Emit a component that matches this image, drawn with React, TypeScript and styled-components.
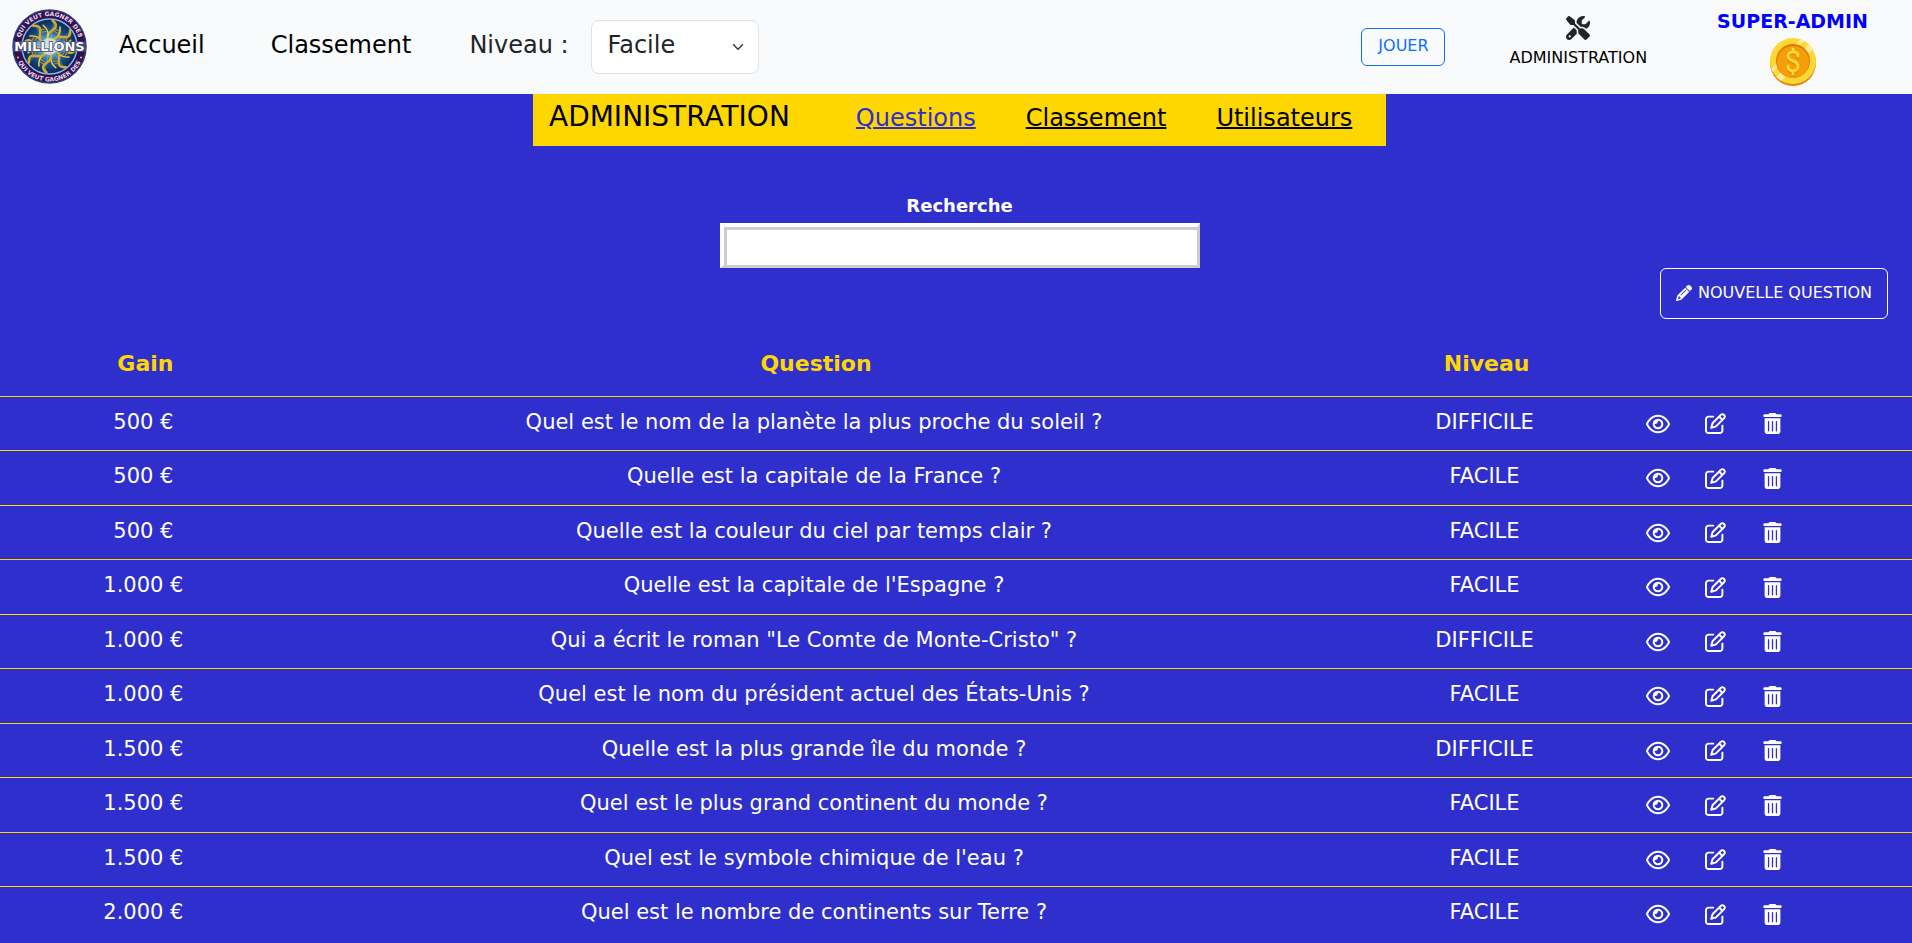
import React from "react";
import styled, { createGlobalStyle } from "styled-components";
import { FaPencil, FaRegEye, FaRegPenToSquare, FaScrewdriverWrench, FaTrashCan } from "react-icons/fa6";

const Global = createGlobalStyle`
  *, *::before, *::after { box-sizing: border-box; }
  body {
    margin: 0;
    background: #2f2fcd;
    color: #fff;
    font-family: "DejaVu Sans", Verdana, sans-serif;
    font-size: 21px;
    line-height: 30px;
  }
`;

const Navbar = styled.header`
  display: flex;
  align-items: center;
  height: 94px;
  padding: 0 44px 2px 12px;
  background: #f8fafc;
  color: #212529;
`;

const NavLinks = styled.nav`
  display: flex;
  align-items: center;
  gap: 66px;
  margin-left: 32px;
  padding-bottom: 2px;
`;

const NavLink = styled.a`
  color: #000;
  font-size: 24px;
  line-height: 36px;
  text-decoration: none;
`;

const LevelField = styled.div`
  display: flex;
  align-items: center;
  gap: 22px;
  margin: 0 auto 0 58px;
  padding-top: 2px;
  font-size: 24px;
`;

const LevelLabel = styled.label`
  padding-bottom: 4px;
`;

const LevelSelectWrap = styled.div`
  display: grid;
  align-items: center;
  & > * { grid-area: 1 / 1; }
  svg { justify-self: end; margin-right: 15px; pointer-events: none; }
`;

const LevelSelect = styled.select`
  appearance: none;
  width: 168px;
  height: 54px;
  padding: 0 16px 4px;
  border: 1px solid #dee2e6;
  border-radius: 8px;
  background: #fff;
  color: #212529;
  font: inherit;
`;

const PlayButton = styled.button`
  min-width: 84px;
  height: 38px;
  margin-top: 2px;
  padding: 0 12px 2px;
  border: 1px solid #0d6efd;
  border-radius: 6px;
  background: transparent;
  color: #0d6efd;
  font: inherit;
  font-size: 16px;
`;

const AdminLink = styled.a`
  display: flex;
  flex-direction: column;
  align-items: center;
  gap: 6px;
  margin: 0 70px 0 64px;
  padding-bottom: 6px;
  color: #000;
  font-size: 16px;
  line-height: 24px;
  text-decoration: none;
  svg { color: #212529; }
`;

const Account = styled.div`
  display: flex;
  flex-direction: column;
  align-items: center;
  gap: 2px;
  color: #00f;
  font-size: 19px;
  font-weight: 700;
`;

const PageHead = styled.div`
  padding-left: 7px;
`;

const AdminBar = styled.nav`
  display: flex;
  align-items: flex-start;
  gap: 66px;
  width: 853px;
  height: 52px;
  margin: 0 auto;
  padding: 5px 0 0 16px;
  background: gold;
  color: #000;
`;

const AdminTitle = styled.h1`
  margin: 0;
  font-size: 28px;
  font-weight: 400;
  line-height: 36px;
`;

const AdminTabs = styled.div`
  display: flex;
  gap: 50px;
`;

const AdminTab = styled.a<{ $active?: boolean }>`
  color: ${(p) => (p.$active ? "#2f2fcd" : "#000")};
  font-size: 24px;
  line-height: 38px;
  text-decoration: underline;
  text-decoration-thickness: 2px;
`;

const Search = styled.form`
  display: flex;
  flex-direction: column;
  align-items: center;
  margin-top: 46px;
`;

const SearchLabel = styled.label`
  font-size: 18px;
  font-weight: 700;
  line-height: 28px;
`;

const SearchInput = styled.input`
  width: 480px;
  height: 45px;
  margin-top: 3px;
  padding: 0 12px;
  border-style: solid;
  border-width: 4px 3px 3px 4px;
  border-color: #fff #cdcdcd #cdcdcd #fff;
  box-shadow: inset 3px 3px 0 #cdcdcd;
  background: #fff;
  font: inherit;
`;

const Toolbar = styled.div`
  display: flex;
  justify-content: flex-end;
  padding-right: 24px;
`;

const NewButton = styled.button`
  display: flex;
  align-items: center;
  gap: 6px;
  height: 51px;
  padding: 0 15px 2px;
  border: 1px solid #fff;
  border-radius: 6px;
  background: transparent;
  color: #fff;
  font: inherit;
  font-size: 16px;
`;

const QuestionTable = styled.table`
  width: 100%;
  margin-top: 12px;
  border-collapse: separate;
  border-spacing: 0;
  table-layout: fixed;
  text-align: center;
`;

const HeadCell = styled.th<{ $width?: string }>`
  width: ${(p) => p.$width ?? "auto"};
  height: 66px;
  padding: 0 0 0 4px;
  border-bottom: 1px solid gold;
  color: gold;
  font-size: 22px;
  font-weight: 700;
`;

const Cell = styled.td`
  padding: 0 0 4px;
  border-bottom: 1px solid gold;
`;

const Row = styled.tr`
  height: 54px;
  &:nth-child(even) { height: 55px; }
  &:last-child ${Cell} { border-bottom-color: transparent; }
`;

const ActionCell = styled(Cell)`
  padding: 0 0 0 18px;
`;

const Actions = styled.div`
  display: flex;
  align-items: center;
  gap: 33px;
`;

const IconButton = styled.button`
  display: flex;
  justify-content: center;
  width: 24px;
  padding: 0;
  border: 0;
  background: transparent;
  color: #fff;
  font-size: 21px;
  svg { flex: none; }
`;

function Logo() {
  const rays = Array.from({ length: 8 }, (_, i) => i * 45);
  return (
    <svg width="75" height="75" viewBox="0 0 150 150" role="img" aria-label="Qui veut gagner des millions">
      <defs>
        <radialGradient id="core">
          <stop offset="0" stopColor="#e4f8ff" />
          <stop offset="0.25" stopColor="#63b4de" />
          <stop offset="0.6" stopColor="#1b5690" />
          <stop offset="1" stopColor="#0c2357" />
        </radialGradient>
        <linearGradient id="band">
          <stop offset="0" stopColor="#5a4a94" />
          <stop offset="0.5" stopColor="#d6f2ff" stopOpacity="0.5" />
          <stop offset="1" stopColor="#5a4a94" />
        </linearGradient>
        <path id="ringTop" d="M14 75a61 61 0 0 1 122 0" />
        <path id="ringBottom" d="M5 75a70 70 0 0 0 140 0" />
      </defs>
      <circle cx="75" cy="75" r="73" fill="#35104f" stroke="#2c3d78" strokeWidth="3" />
      <circle cx="75" cy="75" r="55" fill="url(#core)" stroke="#78bfe6" strokeWidth="3" />
      {rays.map((a) => (
        <g key={a} transform={`rotate(${a + 10} 75 75)`} fill="none" strokeLinecap="round">
          <path d="M75 68C64 57 68 48 75 42S83 28 72 23" stroke="#d9a91e" strokeWidth="5" />
          <path d="M78 62C88 53 93 48 89 33" stroke="#f4ce3c" strokeWidth="3" />
          <path d="M75 65V26" stroke="#73b9e0" strokeWidth="1" />
          <path d="M80 38l7 3m-8 2l7 3" stroke="#c19829" strokeWidth="2" />
        </g>
      ))}
      <circle cx="75" cy="75" r="17" fill="#d6f5ff" opacity="0.65" />
      <rect x="3" y="65" width="144" height="20" fill="url(#band)" opacity="0.8" />
      <g fill="#fff" fontFamily="DejaVu Sans, sans-serif" fontWeight="700" textAnchor="middle">
        <text x="75" y="84" fontSize="26" stroke="#35406c" strokeWidth="3" paintOrder="stroke">MILLIONS</text>
        <g fontSize="12" fill="#e5d9ed">
          <text><textPath href="#ringTop" startOffset="50%">QUI VEUT GAGNER DES</textPath></text>
          <text><textPath href="#ringBottom" startOffset="50%">QUI VEUT GAGNER DES</textPath></text>
        </g>
      </g>
      <g fill="#e8c77a">
        <circle cx="12" cy="53" r="2" /><circle cx="138" cy="53" r="2" />
        <circle cx="12" cy="97" r="2" /><circle cx="138" cy="97" r="2" />
      </g>
    </svg>
  );
}

function Coin() {
  return (
    <svg width="46" height="48" viewBox="0 0 46 48" aria-hidden="true">
      <defs><clipPath id="face"><circle cx="23" cy="23" r="23" /></clipPath></defs>
      <circle cx="23" cy="25" r="23" fill="#e88102" />
      <g clipPath="url(#face)">
        <rect width="46" height="46" fill="#fdd835" />
        <path d="M-2 34L34-2h5L-2 39zM3 42L42 3l4 5L8 46z" fill="#ffeb96" />
      </g>
      <circle cx="23" cy="23" r="17" fill="#dc7d00" />
      <circle cx="23" cy="24" r="16" fill="#f59e0b" />
      <path d="M28 18c0-3-2-4-5-4s-5 2-5 4c0 6 10 4 10 10 0 3-2 5-5 5s-5-2-5-5M23 11v3M23 33v3" transform="translate(0 1)" fill="none" stroke="#dc7d00" strokeWidth="3" strokeLinecap="round" />
      <path d="M28 18c0-3-2-4-5-4s-5 2-5 4c0 6 10 4 10 10 0 3-2 5-5 5s-5-2-5-5M23 11v3M23 33v3" fill="none" stroke="#fdd835" strokeWidth="3" strokeLinecap="round" />
    </svg>
  );
}

const questions = [
  ["500 €", "Quel est le nom de la planète la plus proche du soleil ?", "DIFFICILE"],
  ["500 €", "Quelle est la capitale de la France ?", "FACILE"],
  ["500 €", "Quelle est la couleur du ciel par temps clair ?", "FACILE"],
  ["1.000 €", "Quelle est la capitale de l'Espagne ?", "FACILE"],
  ["1.000 €", "Qui a écrit le roman \"Le Comte de Monte-Cristo\" ?", "DIFFICILE"],
  ["1.000 €", "Quel est le nom du président actuel des États-Unis ?", "FACILE"],
  ["1.500 €", "Quelle est la plus grande île du monde ?", "DIFFICILE"],
  ["1.500 €", "Quel est le plus grand continent du monde ?", "FACILE"],
  ["1.500 €", "Quel est le symbole chimique de l'eau ?", "FACILE"],
  ["2.000 €", "Quel est le nombre de continents sur Terre ?", "FACILE"],
];

export default function App() {
  return (
    <>
      <Global />
      <Navbar>
        <Logo />
        <NavLinks>
          <NavLink href="#accueil">Accueil</NavLink>
          <NavLink href="#classement">Classement</NavLink>
        </NavLinks>
        <LevelField>
          <LevelLabel htmlFor="level">Niveau :</LevelLabel>
          <LevelSelectWrap>
            <LevelSelect id="level" defaultValue="Facile">
              <option>Facile</option>
              <option>Difficile</option>
            </LevelSelect>
            <svg width="12" height="12" viewBox="0 0 16 16" aria-hidden="true">
              <path d="m2 5 6 6 6-6" fill="none" stroke="#343a40" strokeWidth="2" strokeLinecap="round" strokeLinejoin="round" />
            </svg>
          </LevelSelectWrap>
        </LevelField>
        <PlayButton type="button">JOUER</PlayButton>
        <AdminLink href="#administration">
          <FaScrewdriverWrench size={24} />
          ADMINISTRATION
        </AdminLink>
        <Account>
          SUPER-ADMIN
          <Coin />
        </Account>
      </Navbar>
      <main>
        <PageHead>
          <AdminBar aria-label="Administration">
            <AdminTitle>ADMINISTRATION</AdminTitle>
            <AdminTabs>
              <AdminTab href="#questions" $active>Questions</AdminTab>
              <AdminTab href="#scores">Classement</AdminTab>
              <AdminTab href="#utilisateurs">Utilisateurs</AdminTab>
            </AdminTabs>
          </AdminBar>
          <Search>
            <SearchLabel htmlFor="search">Recherche</SearchLabel>
            <SearchInput id="search" type="text" />
          </Search>
        </PageHead>
        <Toolbar>
          <NewButton type="button"><FaPencil />NOUVELLE QUESTION</NewButton>
        </Toolbar>
        <QuestionTable>
          <thead>
            <tr>
              <HeadCell $width="15%">Gain</HeadCell>
              <HeadCell>Question</HeadCell>
              <HeadCell $width="15%">Niveau</HeadCell>
              <HeadCell $width="284px" aria-label="Actions" />
            </tr>
          </thead>
          <tbody>
            {questions.map(([gain, text, level]) => (
              <Row key={text}>
                <Cell>{gain}</Cell>
                <Cell>{text}</Cell>
                <Cell>{level}</Cell>
                <ActionCell>
                  <Actions>
                    <IconButton type="button" aria-label="Voir"><FaRegEye size={24} /></IconButton>
                    <IconButton type="button" aria-label="Modifier"><FaRegPenToSquare /></IconButton>
                    <IconButton type="button" aria-label="Supprimer"><FaTrashCan /></IconButton>
                  </Actions>
                </ActionCell>
              </Row>
            ))}
          </tbody>
        </QuestionTable>
      </main>
    </>
  );
}
